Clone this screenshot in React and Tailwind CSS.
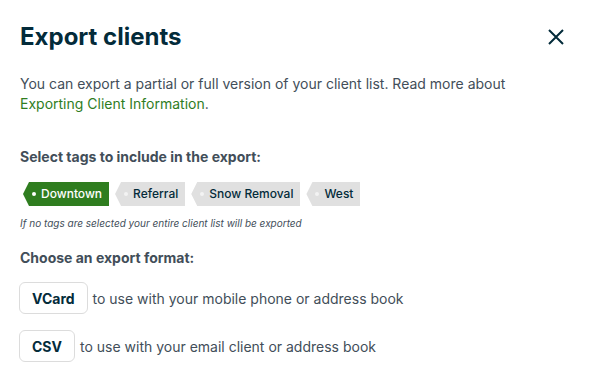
import React from "react";

function Tag({ label, active }) {
  return (
    <div
      className={
        "flex h-6 items-center pl-[9px] pr-[7px] text-[12px] font-medium [clip-path:polygon(6px_0,100%_0,100%_100%,6px_100%,0_50%)] " +
        (active ? "bg-[#2f7d1f] text-white" : "bg-[#e0e0e0] text-[#032b3a]")
      }
    >
      <span
        className={
          "mr-[5px] h-[4px] w-[4px] rounded-full " +
          (active ? "bg-white" : "bg-[#f3f3f3]")
        }
      />
      <span>{label}</span>
    </div>
  );
}

export default function App() {
  return (
    <div
      className="w-[591px] h-[386px] bg-white px-5 text-[#424e59]"
      style={{ fontFamily: "Inter, 'Noto Sans', sans-serif" }}
    >
      <div className="flex items-center justify-between pt-[22px]">
        <h1 className="text-[24px] font-bold leading-[30px] text-[#032b3a]">
          Export clients
        </h1>
        <svg
          width="18"
          height="18"
          viewBox="0 0 18 18"
          className="mr-[6px]"
          fill="none"
          stroke="#032b3a"
          strokeWidth="2"
        >
          <path d="M2 2L16 16M16 2L2 16" />
        </svg>
      </div>

      <p className="mt-[22px] text-[14px] leading-[20px]">
        You can export a partial or full version of your client list. Read more about{" "}
        <span className="text-[#2f7d1f]">Exporting Client Information</span>.
      </p>

      <h2 className="mt-[33px] text-[14px] font-bold leading-[20px] text-[#424e59]">
        Select tags to include in the export:
      </h2>

      <div className="mt-[15px] flex gap-[6px] pl-[3px]">
        <Tag label="Downtown" active />
        <Tag label="Referral" />
        <Tag label="Snow Removal" />
        <Tag label="West" />
      </div>

      <p className="mt-[10px] text-[10px] italic leading-[14px] text-[#424e59]">
        If no tags are selected your entire client list will be exported
      </p>

      <h2 className="mt-[18px] text-[14px] font-bold leading-[20px]">
        Choose an export format:
      </h2>

      <div className="mt-[14px] flex items-center gap-[5px]">
        <div className="-ml-px flex h-8 items-center rounded-[6px] border border-[#dcdcdc] px-[12px] text-[14px] font-bold text-[#032b3a]">
          VCard
        </div>
        <span className="text-[14px]">to use with your mobile phone or address book</span>
      </div>

      <div className="mt-[16px] flex items-center gap-[5px]">
        <div className="-ml-px flex h-8 items-center rounded-[6px] border border-[#dcdcdc] px-[12px] text-[14px] font-bold text-[#032b3a]">
          CSV
        </div>
        <span className="text-[14px]">to use with your email client or address book</span>
      </div>
    </div>
  );
}
